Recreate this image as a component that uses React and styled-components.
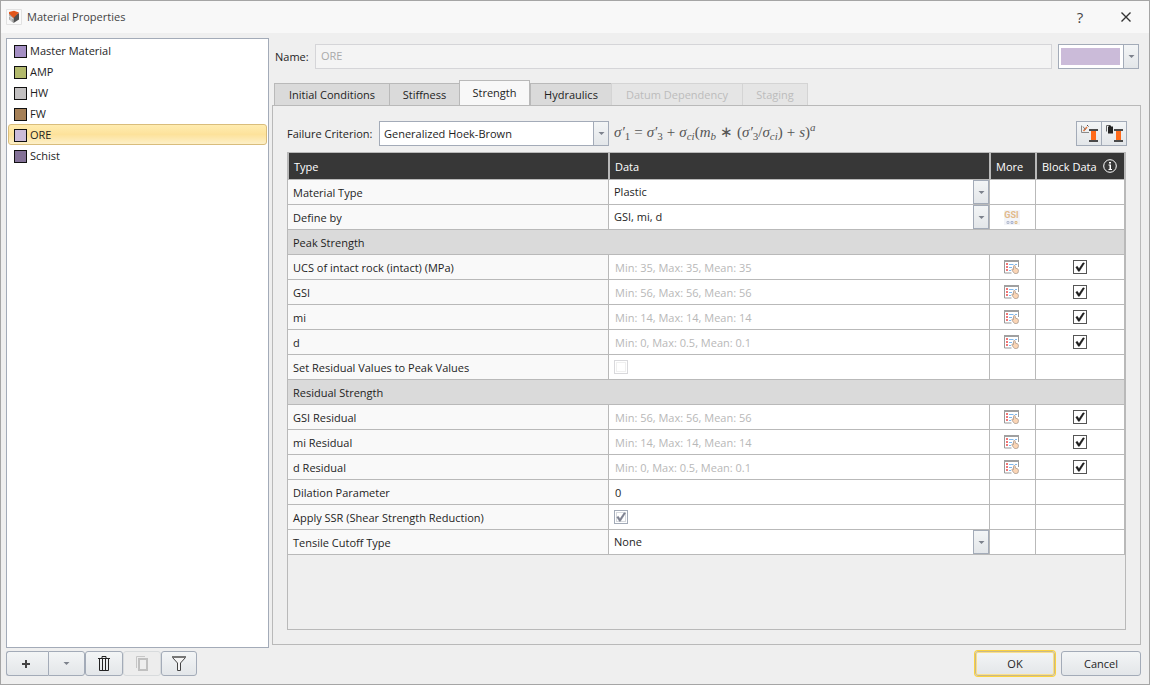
import React from "react";
import styled, { createGlobalStyle, css } from "styled-components";

const line = "#b9b9b9";
const edge = "#a3abb8";
const face = "linear-gradient(#f3f5f6, #e3e6e9)";

const GlobalStyle = createGlobalStyle`
  * { box-sizing: border-box; }
  body {
    margin: 0;
    background: #efefef;
    color: #1e1e1e;
    font: 11px/16px "Open Sans", "Noto Sans", sans-serif;
  }
  button, input, select { font: inherit; color: inherit; margin: 0; }
`;

const Dialog = styled.main`
  display: flex;
  flex-direction: column;
  min-height: 100vh;
  border: 1px solid #a5a5a5;
  background: #efefef;
`;

const TitleBar = styled.header`
  display: flex;
  align-items: center;
  height: 32px;
  padding-left: 5px;
  background: #f8f8f8;
`;

const Title = styled.h1`
  flex: 1;
  margin: 0 0 0 5px;
  font-size: 11px;
  font-weight: 400;
  color: #444;
`;

const CaptionButton = styled.button`
  display: grid;
  place-items: center;
  width: 46px;
  height: 32px;
  padding: 0;
  border: 0;
  background: none;
  font-size: 15px;
  color: #444;
`;

const Content = styled.div`
  flex: 1;
  display: grid;
  grid-template-columns: 263px minmax(0, 1fr);
  column-gap: 3px;
  padding: 5px 8px 0 5px;
`;

const MaterialList = styled.ul`
  margin: 0;
  padding: 1px;
  list-style: none;
  border: 1px solid ${edge};
  background: #fff;
`;

const Material = styled.button`
  display: flex;
  align-items: flex-end;
  gap: 3px;
  width: 100%;
  height: 21px;
  padding: 0 5px 2px;
  border: 1px solid transparent;
  border-radius: 3px;
  background: none;
  line-height: 14px;
  text-align: left;
  ${(p) =>
    p.$selected &&
    css`
      border-color: #d9bd7c;
      background: linear-gradient(#ffecb0, #fde29b 50%, #fdf0c8);
    `}
`;

const Swatch = styled.span`
  width: 13px;
  height: 13px;
  border: 1px solid #111;
  background: ${(p) => p.$color};
`;

const Editor = styled.section`
  display: flex;
  flex-direction: column;
  padding-bottom: 3px;
`;

const NameRow = styled.div`
  display: flex;
  align-items: center;
  height: 25px;
  margin: 6px 2px 11px 3px;

  label { width: 40px; }
`;

const NameInput = styled.input`
  flex: 1;
  min-width: 0;
  height: 25px;
  padding: 0 5px 2px;
  border: 1px solid #d5d5d8;
  background: #f4f4f4;

  &:disabled { color: #a9a9a9; }
`;

const ColorPicker = styled.button`
  display: flex;
  width: 81px;
  height: 25px;
  margin-left: 6px;
  padding: 0;
  border: 1px solid ${edge};
  background: #fff;
`;

const ColorSample = styled.span`
  flex: 1;
  height: 17px;
  margin: 3px 3px 3px 2px;
  background: #cbbbd9;
`;

const ArrowBox = styled.span`
  display: grid;
  place-items: center;
  align-self: stretch;
  width: 15px;
  border-left: 1px solid ${edge};
  background: ${face};
`;

const TabBar = styled.div`
  display: flex;
  align-items: flex-end;
  height: 26px;
  padding-left: 2px;
  margin-bottom: -1px;
`;

const Tab = styled.button`
  width: ${(p) => p.$width}px;
  height: 23px;
  padding: 0;
  border: 1px solid ${line};
  border-right-width: 0;
  background: #dadada;

  &:last-child { border-right-width: 1px; }

  &:disabled {
    border-color: #d4d4d4;
    border-bottom-color: ${line};
    background: #e5e5e5;
    color: #bcbcbc;
  }

  &[aria-selected="true"] {
    height: 26px;
    border-right-width: 1px;
    border-bottom-color: #f8f8f8;
    background: #f8f8f8;
  }
`;

const Panel = styled.div`
  flex: 1;
  display: flex;
  flex-direction: column;
  gap: 6px;
  padding: 15px 14px 14px;
  border: 1px solid ${line};
`;

const CriterionRow = styled.div`
  display: flex;
  align-items: center;
  height: 25px;

  label { width: 92px; }
`;

const SelectFrame = styled.span`
  display: grid;
  grid-template: 100% / 100%;
  width: ${(p) => p.$width};
  height: ${(p) => p.$height};

  > * { grid-area: 1 / 1; }

  select {
    appearance: none;
    width: 100%;
    height: 100%;
    padding: ${(p) => (p.$bordered ? "0 18px 0 4px" : "0 18px 1px 5px")};
    border: ${(p) => (p.$bordered ? `1px solid ${edge}` : "0")};
    border-radius: 0;
    background: #fff;
  }

  ${ArrowBox} {
    justify-self: end;
    pointer-events: none;
    width: 16px;
    border: 1px solid ${edge};
  }
`;

const Formula = styled.span`
  flex: 1;
  padding: 0 0 4px 5px;
  font: 15px/20px "Liberation Serif", serif;
  color: #555;
  white-space: nowrap;

  sub, sup { font-size: 11px; line-height: 0; }
  sub { vertical-align: -3px; }
  sup { vertical-align: 6px; }
`;

const Operator = styled.span`
  margin: 0 4px;
`;

const ToolPair = styled.div`
  display: flex;
  width: 51px;
  height: 25px;
  margin-right: -1px;
`;

const ToolButton = styled.button`
  display: grid;
  place-items: center;
  flex: 1;
  padding: 0;
  border: 1px solid ${edge};
  background: ${face};

  & + & { border-left: 0; }
`;

const TableFrame = styled.div`
  flex: 1;
  border: 1px solid ${line};
`;

const Table = styled.table`
  width: 100%;
  table-layout: fixed;
  border-collapse: separate;
  border-spacing: 0;
`;

const HeadCell = styled.th`
  width: ${(p) => p.$width};
  height: 27px;
  padding: 2px 0 0 5px;
  border: 0 solid ${line};
  border-width: 0 1px 1px;
  background: #373737;
  color: #fff;
  font-weight: 400;
  text-align: left;
  white-space: nowrap;

  svg { vertical-align: -2px; margin-left: 4px; }
`;

const Cell = styled.td`
  height: 25px;
  padding: 0;
  border: 0 solid ${line};
  border-width: 0 1px 1px 0;
  background: #fff;
`;

const RowLabel = styled.th`
  height: 25px;
  padding: 1px 0 0 5px;
  border: 0 solid ${line};
  border-width: 0 1px 1px 0;
  background: #f9f9f9;
  font-weight: 400;
  text-align: left;
`;

const GroupLabel = styled(RowLabel)`
  background: #dadada;
`;

const ValueInput = styled.input`
  display: block;
  width: 100%;
  height: 24px;
  padding: 1px 6px 0;
  border: 0;
  background: none;

  &:disabled { color: #b8b8b8; }
`;

const CellCenter = styled.div`
  display: grid;
  place-items: center;
  height: 24px;
`;

const CellStart = styled.div`
  display: grid;
  align-items: center;
  height: 24px;
  padding-left: 5px;
`;

const CheckFrame = styled.span`
  display: grid;
  place-items: center;
  width: 14px;
  height: 14px;

  > * { grid-area: 1 / 1; }
  svg { pointer-events: none; }

  input {
    appearance: none;
    width: 14px;
    height: 14px;
    border: 1px solid ${(p) => p.$border};
    background: #fff;
    box-shadow: inset 0 0 0 1px #fff, inset 0 0 0 2px ${(p) => p.$inner};
  }
`;

const IconButton = styled.button`
  display: grid;
  padding: 0 2px 0 0;
  border: 0;
  background: none;
`;

const Footer = styled.footer`
  display: flex;
  align-items: flex-start;
  height: 36px;
  padding: 3px 8px 0 5px;
`;

const FooterButton = styled.button`
  display: grid;
  place-items: center;
  width: ${(p) => p.$width}px;
  height: 25px;
  padding: 0;
  border: 1px solid ${edge};
  border-radius: ${(p) => p.$corners || "3px"};
  background: ${face};

  &:disabled { border-color: #d8dbdd; background: #ededed; }

  ${(p) =>
    p.$joined &&
    css`
      border-right: 0;
      padding-right: 4px;
    `}

  ${(p) =>
    p.$primary &&
    css`
      margin-right: 6px;
      border-color: #c8b98a;
      box-shadow: 0 0 0 1px #fbd23f, inset 0 0 0 1px #fbe08a;
    `}
`;

const Spacer = styled.div`
  flex: 1;
`;

const Arrow = () => (
  <svg width="7" height="3" viewBox="0 0 7 3" aria-hidden="true">
    <path d="M.5 0h6L3.500 3z" fill="#7d828c" />
  </svg>
);

const AppIcon = () => (
  <svg width="16" height="16" viewBox="0 0 16 16" aria-hidden="true">
    <path d="M.5.5h15v15H.5z" fill="#fafafa" stroke="#e2e2e2" />
    <path d="M3 4v6.500l4.500 3.500V7z" fill="#a9a9a9" />
    <path d="M13 4v6.500L7.500 14V7z" fill="#515151" />
    <path d="M3 3l5-1.200L13 3.500 9.500 7 7.500 9 3 4.500z" fill="#e2561b" />
    <path d="M5 8v4.300M3 7l4.500 3" stroke="#ddd" fill="none" />
  </svg>
);

const CloseIcon = () => (
  <svg width="10" height="10" viewBox="0 0 10 10" aria-hidden="true">
    <path d="M.5.5l9 9M9.500.5l-9 9" stroke="#333" strokeWidth="1.400" />
  </svg>
);

const InfoIcon = () => (
  <svg width="14" height="14" viewBox="0 0 14 14" aria-hidden="true">
    <circle cx="7" cy="7" r="6.300" fill="none" stroke="#fff" />
    <path d="M6 3h2v1.500H6zM5.500 5.500H8V10h1v1H5.500v-1h1V6.500h-1z" fill="#fff" />
  </svg>
);

const Beam = () => (
  <>
    <path d="M10 6h5v9h-5z" fill="#ff6a1a" />
    <path d="M8 4h9v2H8zM8 15h9v2H8z" fill="#4a4a4a" />
  </>
);

const PickIcon = () => (
  <svg width="17" height="17" viewBox="0 0 17 17" aria-hidden="true">
    <path d="M.5.5v7H8" fill="none" stroke="#8a8a8a" />
    <path d="M2.500 6L6 2" stroke="#e5763c" strokeWidth="1.500" />
    <path d="M2 1.500l2.500 3.500" stroke="#777" />
    <path d="M6 0l1.500 1.500" stroke="#444" />
    <Beam />
  </svg>
);

const PasteIcon = () => (
  <svg width="17" height="17" viewBox="0 0 17 17" aria-hidden="true">
    <path d="M.5 6.500v-6H4" fill="none" stroke="#666" />
    <path d="M2 1.500h1V.5h2v1h2v7H2z" fill="#222" />
    <Beam />
  </svg>
);

const StatsIcon = () => (
  <svg width="15" height="14" viewBox="0 0 15 14" aria-hidden="true">
    <path d="M.5 1v12h7M14.500 1v6" fill="none" stroke="#999" />
    <path d="M0 0h15v2H0z" fill="#a0a0a0" />
    <path d="M2 3h2v2H2zM2 6h2v2H2zM2 9h2v2H2z" fill="#ef7676" />
    <path d="M5 4.500h4.500M11 4.500h2M5 7.500h3M5 10.500h2" stroke="#7fb8ee" />
    <path
      d="M9.500 6.500q0-1 .9-1t.9 1v1.500l2.100.8q1 .4 1 1.500v1q0 2.200-2 2.200h-1.200q-1 0-1.600-1L7.900 10q-.2-1 .7-.9l.9.500z"
      fill="#fbd5b5"
      stroke="#a8978a"
      strokeWidth=".8"
    />
  </svg>
);

const GsiMark = styled.span`
  display: grid;
  justify-items: center;
  width: 16px;
  background: #f3f4f8;
  color: #e2b98a;
  font: 700 9px/11px Roboto, "Liberation Sans", sans-serif;
`;

const GsiIcon = () => (
  <GsiMark>
    GSI
    <svg width="12" height="4" viewBox="0 0 12 4" aria-hidden="true">
      <path d="M1 .5h2v2H1z" fill="#eef" stroke="#b5bccd" />
      <path d="M5 .5h2v2H5z" fill="#eef" stroke="#a9b4d0" />
      <path d="M9 .5h2v2H9z" fill="#fff0d0" stroke="#dbbd90" />
    </svg>
  </GsiMark>
);

const PlusIcon = () => (
  <svg width="8" height="8" viewBox="0 0 8 8" aria-hidden="true">
    <path d="M4 0v8M0 4h8" stroke="#444" strokeWidth="2" />
  </svg>
);

const TrashIcon = () => (
  <svg width="12" height="15" viewBox="0 0 12 15" aria-hidden="true">
    <path d="M0 2.500h12M4 2v-1.500h4v1.500" fill="none" stroke="#222" />
    <path d="M1.500 3v11.500h9V3M4.500 3v11M7.500 3v11" fill="none" stroke="#222" />
  </svg>
);

const CopyIcon = () => (
  <svg width="12" height="15" viewBox="0 0 12 15" aria-hidden="true">
    <path d="M.5 12V.5H9" fill="none" stroke="#c6c6c6" />
    <path d="M3 3h8v11H3z" fill="#eee" stroke="#c0c0c0" strokeWidth="2" />
  </svg>
);

const FilterIcon = () => (
  <svg width="14" height="15" viewBox="0 0 14 15" aria-hidden="true">
    <path d="M.5.5h13v1L8.500 7v7.500h-3V7L.5 1.500z" fill="#f5f5f5" stroke="#444" />
    <path d="M0 1h14" stroke="#777" strokeWidth="2" />
  </svg>
);

const checkTones = {
  normal: { border: "#555", inner: "#fff", mark: "#1c1c1c" },
  dim: { border: "#a3abb8", inner: "#d6d9de", mark: "#7c8090" },
  disabled: { border: "#d9d9dc", inner: "#f0f0f0", mark: "#ccc" },
};

function Check({ label, tone = "normal", checked = false, disabled = false }) {
  const [on, setOn] = React.useState(checked);
  const c = checkTones[tone];
  return (
    <CheckFrame $border={c.border} $inner={c.inner}>
      <input
        type="checkbox"
        aria-label={label}
        checked={on}
        disabled={disabled}
        onChange={(e) => setOn(e.target.checked)}
      />
      {on && (
        <svg width="10" height="10" viewBox="0 0 10 10" aria-hidden="true">
          <path d="M.8 5.200L2.300 4.300 4 6.800 8 .8l1.500.4L4.400 9.300H3.400z" fill={c.mark} stroke={c.mark} strokeWidth=".5" />
        </svg>
      )}
    </CheckFrame>
  );
}

function Select({ id, label, value, options, width = "100%", height = "24px", bordered = false }) {
  return (
    <SelectFrame $width={width} $height={height} $bordered={bordered}>
      <select id={id} aria-label={label} defaultValue={value}>
        {options.map((o) => (
          <option key={o}>{o}</option>
        ))}
      </select>
      <ArrowBox>
        <Arrow />
      </ArrowBox>
    </SelectFrame>
  );
}

const materials = [
  ["Master Material", "#a48fc4"],
  ["AMP", "#b2b96c"],
  ["HW", "#c2c0c1"],
  ["FW", "#a58057"],
  ["ORE", "#cbbbd9"],
  ["Schist", "#837197"],
];

const tabs = [
  { name: "Initial Conditions", width: 115 },
  { name: "Stiffness", width: 70 },
  { name: "Strength", width: 71, selected: true },
  { name: "Hydraulics", width: 81 },
  { name: "Datum Dependency", width: 131, disabled: true },
  { name: "Staging", width: 66, disabled: true },
];

const rows = [
  { label: "Material Type", options: ["Plastic", "Elastic"] },
  { label: "Define by", options: ["GSI, mi, d", "mb, s, a"], gsi: true },
  { group: "Peak Strength" },
  { label: "UCS of intact rock (intact) (MPa)", stats: "Min: 35, Max: 35, Mean: 35" },
  { label: "GSI", stats: "Min: 56, Max: 56, Mean: 56" },
  { label: "mi", stats: "Min: 14, Max: 14, Mean: 14" },
  { label: "d", stats: "Min: 0, Max: 0.5, Mean: 0.1" },
  { label: "Set Residual Values to Peak Values", check: { tone: "disabled", disabled: true } },
  { group: "Residual Strength" },
  { label: "GSI Residual", stats: "Min: 56, Max: 56, Mean: 56" },
  { label: "mi Residual", stats: "Min: 14, Max: 14, Mean: 14" },
  { label: "d Residual", stats: "Min: 0, Max: 0.5, Mean: 0.1" },
  { label: "Dilation Parameter", value: "0" },
  { label: "Apply SSR (Shear Strength Reduction)", check: { tone: "dim", checked: true } },
  { label: "Tensile Cutoff Type", options: ["None", "Tensile Strength"] },
];

function PropertyRow({ row }) {
  if (row.group) {
    return (
      <tr>
        <GroupLabel colSpan={4} scope="colgroup">{row.group}</GroupLabel>
      </tr>
    );
  }
  return (
    <tr>
      <RowLabel scope="row">{row.label}</RowLabel>
      <Cell>
        {row.options && <Select label={row.label} value={row.options[0]} options={row.options} />}
        {row.stats && <ValueInput aria-label={row.label} value={row.stats} disabled readOnly />}
        {row.value && <ValueInput aria-label={row.label} defaultValue={row.value} />}
        {row.check && (
          <CellStart>
            <Check label={row.label} {...row.check} />
          </CellStart>
        )}
      </Cell>
      <Cell>
        <CellCenter>
          {row.gsi && <IconButton aria-label="GSI calculator"><GsiIcon /></IconButton>}
          {row.stats && <IconButton aria-label={`${row.label} data`}><StatsIcon /></IconButton>}
        </CellCenter>
      </Cell>
      <Cell>
        <CellCenter>
          {row.stats && <Check label={`${row.label} block data`} checked />}
        </CellCenter>
      </Cell>
    </tr>
  );
}

export default function App() {
  return (
    <>
      <GlobalStyle />
      <Dialog>
        <TitleBar>
          <AppIcon />
          <Title>Material Properties</Title>
          <CaptionButton aria-label="Help">?</CaptionButton>
          <CaptionButton aria-label="Close"><CloseIcon /></CaptionButton>
        </TitleBar>

        <Content>
          <MaterialList>
            {materials.map(([name, color]) => (
              <li key={name}>
                <Material $selected={name === "ORE"}>
                  <Swatch $color={color} />
                  {name}
                </Material>
              </li>
            ))}
          </MaterialList>

          <Editor>
            <NameRow>
              <label htmlFor="material-name">Name:</label>
              <NameInput id="material-name" value="ORE" disabled readOnly />
              <ColorPicker aria-label="Material colour">
                <ColorSample />
                <ArrowBox><Arrow /></ArrowBox>
              </ColorPicker>
            </NameRow>

            <TabBar role="tablist">
              {tabs.map((t) => (
                <Tab key={t.name} role="tab" aria-selected={!!t.selected} disabled={t.disabled} $width={t.width}>
                  {t.name}
                </Tab>
              ))}
            </TabBar>

            <Panel role="tabpanel">
              <CriterionRow>
                <label htmlFor="criterion">Failure Criterion:</label>
                <Select
                  id="criterion"
                  value="Generalized Hoek-Brown"
                  options={["Generalized Hoek-Brown", "Mohr-Coulomb"]}
                  width="230px"
                  height="25px"
                  bordered
                />
                <Formula>
                  <i>σ′</i><sub>1</sub><Operator>=</Operator><i>σ′</i><sub>3</sub><Operator>+</Operator>
                  <i>σ<sub>ci</sub></i>(<i>m<sub>b</sub></i><Operator>∗</Operator>(<i>σ′</i><sub>3</sub>/<i>σ<sub>ci</sub></i>)
                  <Operator>+</Operator><i>s</i>)<sup><i>a</i></sup>
                </Formula>
                <ToolPair>
                  <ToolButton aria-label="Pick properties"><PickIcon /></ToolButton>
                  <ToolButton aria-label="Copy properties"><PasteIcon /></ToolButton>
                </ToolPair>
              </CriterionRow>

              <TableFrame>
                <Table>
                  <thead>
                    <tr>
                      <HeadCell scope="col" $width="321px">Type</HeadCell>
                      <HeadCell scope="col" $width="auto">Data</HeadCell>
                      <HeadCell scope="col" $width="46px">More</HeadCell>
                      <HeadCell scope="col" $width="89px">Block Data <InfoIcon /></HeadCell>
                    </tr>
                  </thead>
                  <tbody>
                    {rows.map((row) => (
                      <PropertyRow key={row.group || row.label} row={row} />
                    ))}
                  </tbody>
                </Table>
              </TableFrame>
            </Panel>
          </Editor>
        </Content>

        <Footer>
          <FooterButton $width={42} $joined $corners="3px 0 0 3px" aria-label="Add material"><PlusIcon /></FooterButton>
          <FooterButton $width={37} $corners="0 3px 3px 0" aria-label="More add options"><Arrow /></FooterButton>
          <FooterButton $width={38} aria-label="Delete material"><TrashIcon /></FooterButton>
          <FooterButton $width={38} aria-label="Duplicate material" disabled><CopyIcon /></FooterButton>
          <FooterButton $width={36} aria-label="Filter materials"><FilterIcon /></FooterButton>
          <Spacer />
          <FooterButton $width={80} $primary>OK</FooterButton>
          <FooterButton $width={80}>Cancel</FooterButton>
        </Footer>
      </Dialog>
    </>
  );
}
